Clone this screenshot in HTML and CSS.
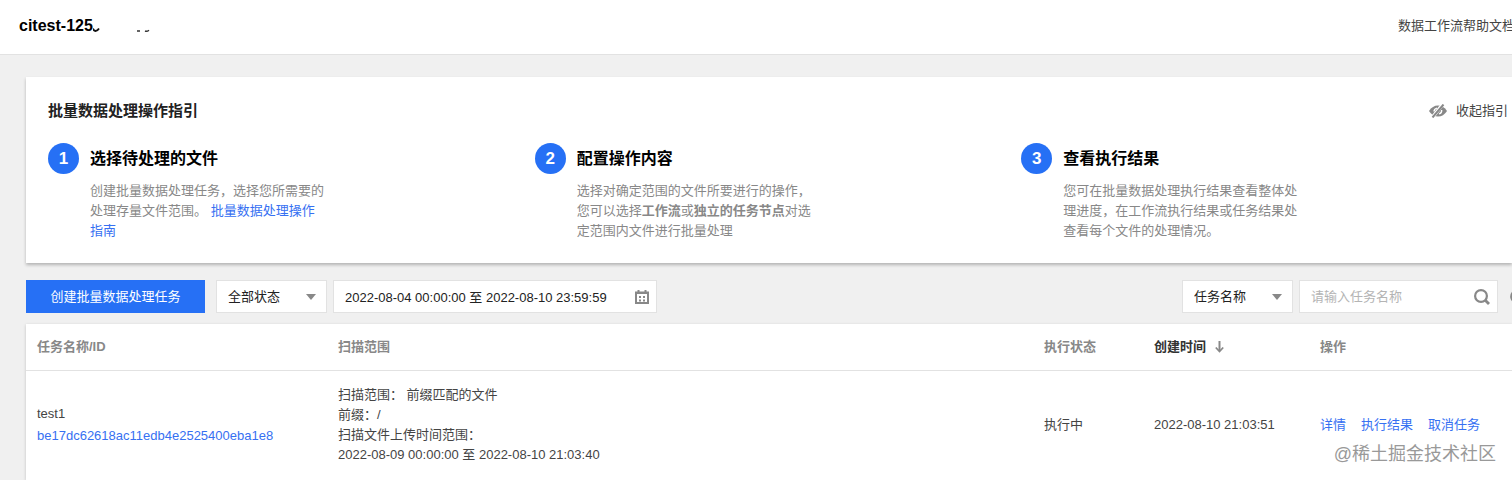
FILE: index.html
```html
<!DOCTYPE html>
<html lang="zh-CN">
<head>
<meta charset="utf-8">
<title>citest</title>
<link rel="stylesheet" href="styles.css">
</head>
<body>
<header class="topbar">
  <h1 class="bucket">citest-125<svg class="bucket-mask" width="60" height="16" viewBox="0 0 60 16" aria-hidden="true"><path d="M0 9.500Q.5 12 2.500 12Q4.500 12 6 9.500" fill="none" stroke="#111" stroke-width="1.800"/><path d="M44 12h3M52 12q2 .8 4-.8" fill="none" stroke="#333" stroke-width="1.400"/></svg></h1>
  <a class="help" href="#help">数据工作流帮助文档</a>
</header>
<main class="page">
  <section class="guide">
    <div class="guide-head">
      <h2 class="guide-title">批量数据处理操作指引</h2>
      <button class="collapse" type="button">
        <svg width="18" height="14" viewBox="0 0 18 14" aria-hidden="true"><path d="M0 7Q3.500 1.500 9 1.500Q14.500 1.500 18 7Q14.500 12.500 9 12.500Q3.500 12.500 0 7Z" fill="#888"/><path d="M8 4Q5 5 5 7.500M12.700 6Q13 9 10 10" fill="none" stroke="#fff" stroke-width="1.300"/><path d="M2.500 14.500L14 0" stroke="#fff" stroke-width="3.600"/><path d="M3.500 13.500L14.500 .5" stroke="#888" stroke-width="2"/></svg>
        收起指引
      </button>
    </div>
    <ol class="steps">
      <li class="step">
        <span class="num">1</span>
        <div><h3 class="step-title">选择待处理的文件</h3>
        <p class="step-text">创建批量数据处理任务，选择您所需要的处理存量文件范围。 <a href="#guide">批量数据处理操作指南</a></p></div>
      </li>
      <li class="step">
        <span class="num">2</span>
        <div><h3 class="step-title">配置操作内容</h3>
        <p class="step-text">选择对确定范围的文件所要进行的操作，您可以选择<b>工作流</b>或<b>独立的任务节点</b>对选定范围内文件进行批量处理</p></div>
      </li>
      <li class="step">
        <span class="num">3</span>
        <div><h3 class="step-title">查看执行结果</h3>
        <p class="step-text">您可在批量数据处理执行结果查看整体处理进度，在工作流执行结果或任务结果处查看每个文件的处理情况。</p></div>
      </li>
    </ol>
  </section>
  <div class="toolbar">
    <button class="create" type="button">创建批量数据处理任务</button>
    <div class="group">
      <div class="field select">
        <select class="control" aria-label="状态"><option>全部状态</option></select>
        <svg width="10" height="6" viewBox="0 0 10 6" aria-hidden="true"><path d="M0 0H10L5 6Z" fill="#888"/></svg>
      </div>
      <div class="field date">
        <input class="control" type="text" aria-label="时间范围" value="2022-08-04 00:00:00 至 2022-08-10 23:59:59">
        <svg width="14" height="14" viewBox="0 0 14 14" aria-hidden="true"><path d="M1 2.500H13V13H1Z" fill="none" stroke="#888" stroke-width="2"/><path d="M1 3H13M3.500 0V3M10.500 0V3" stroke="#888" stroke-width="2"/><path d="M4 6h2v2H4zM8 6h2v2H8zM4 9.500h2v2H4zM8 9.500h2v2H8z" fill="#888"/></svg>
      </div>
    </div>
    <div class="group search-group">
      <div class="field select">
        <select class="control" aria-label="搜索字段"><option>任务名称</option></select>
        <svg width="10" height="6" viewBox="0 0 10 6" aria-hidden="true"><path d="M0 0H10L5 6Z" fill="#888"/></svg>
      </div>
      <div class="field search">
        <input class="control" type="text" aria-label="搜索任务" placeholder="请输入任务名称">
        <svg width="16" height="16" viewBox="0 0 16 16" aria-hidden="true"><circle cx="7" cy="7" r="5.900" fill="none" stroke="#888" stroke-width="2.200"/><path d="M11 11L15 15" stroke="#888" stroke-width="2.800"/></svg>
      </div>
    </div>
    <button class="refresh" type="button" aria-label="刷新"><svg width="16" height="16" viewBox="0 0 16 16" aria-hidden="true"><path d="M13 4A6 6 0 1 0 14 9" fill="none" stroke="#888" stroke-width="2"/><path d="M15 1V6H10Z" fill="#888"/></svg></button>
  </div>
  <div class="table-card">
    <table class="tasks">
      <colgroup><col class="c-name"><col><col class="c-status"><col class="c-time"><col class="c-ops"></colgroup>
      <thead>
        <tr><th>任务名称/ID</th><th>扫描范围</th><th>执行状态</th><th class="sorted">创建时间<svg class="arrow" width="9" height="12" viewBox="0 0 9 12" aria-hidden="true"><path d="M4.500 0V10" stroke="#888" stroke-width="2"/><path d="M.8 6.500L4.500 10.500L8.200 6.500" fill="none" stroke="#888" stroke-width="1.800"/></svg></th><th>操作</th></tr>
      </thead>
      <tbody>
        <tr>
          <td class="name">test1<br><a href="#task">be17dc62618ac11edb4e2525400eba1e8</a></td>
          <td>扫描范围： 前缀匹配的文件<br>前缀：/<br>扫描文件上传时间范围：<br>2022-08-09 00:00:00 至 2022-08-10 21:03:40</td>
          <td>执行中</td>
          <td>2022-08-10 21:03:51</td>
          <td><div class="ops"><a href="#detail">详情</a><a href="#result">执行结果</a><a href="#cancel">取消任务</a></div></td>
        </tr>
      </tbody>
    </table>
  </div>
</main>
<div class="watermark">@稀土掘金技术社区</div>
</body>
</html>
```
FILE: styles.css
```css
* { box-sizing: border-box; }

body {
  margin: 0;
  min-height: 100vh;
  display: flex;
  flex-direction: column;
  position: relative;
  overflow-x: hidden;
  background: #f0f0f0;
  color: #444;
  font: 13px/20px "Liberation Sans", "Noto Sans CJK SC", sans-serif;
}

h1, h2, h3, p, ol { margin: 0; padding: 0; }
a { color: #3670f2; text-decoration: none; }
svg { flex: none; }

button, input, select {
  font: inherit;
  color: inherit;
  border: 0;
  padding: 0;
  background: none;
}

.topbar {
  display: flex;
  justify-content: space-between;
  align-items: center;
  height: 55px;
  padding: 0 0 3px 19px;
  background: #fff;
  border-bottom: 1px solid #e2e2e2;
}

.bucket { display: flex; align-items: center; font-size: 16px; color: #000; }
.bucket-mask { margin-top: 2px; }
.help { color: #444; margin-right: -3px; white-space: nowrap; }

.page {
  flex: 1;
  display: flex;
  flex-direction: column;
  padding: 22px 0 0 26px;
}

.guide {
  padding: 24px 4px 22px 22px;
  background: #fff;
  box-shadow: 0 2px 3px rgba(0, 0, 0, .25);
}

.guide-head { display: flex; justify-content: space-between; align-items: center; }
.guide-title { font-size: 15px; line-height: 20px; color: #222; }
.collapse { display: flex; align-items: center; gap: 9px; }

.steps {
  display: grid;
  grid-template-columns: repeat(3, 1fr);
  margin-top: 22px;
  list-style: none;
}

.step { display: flex; align-items: flex-start; gap: 11px; }

.num {
  flex: none;
  width: 31px;
  height: 31px;
  border-radius: 50%;
  background: #2670f5;
  color: #fff;
  font-size: 17px;
  font-weight: bold;
  line-height: 31px;
  text-align: center;
}

.step-title { font-size: 16px; line-height: 32px; color: #000; }
.step-text { width: 236px; margin-top: 6px; color: #888; }

.toolbar {
  display: flex;
  align-items: center;
  gap: 11px;
  padding: 17px 0 11px;
  overflow: hidden;
}

.create {
  width: 179px;
  height: 33px;
  background: #2670f5;
  color: #fff;
}

.group { display: flex; gap: 6px; }
.search-group { margin-left: auto; }

.field {
  display: flex;
  align-items: center;
  height: 33px;
  padding: 0 10px 0 11px;
  background: #fff;
  border: 1px solid #e2e2e2;
  color: #222;
}

.select { width: 111px; }
.date { width: 324px; padding-right: 7px; }
.search { width: 199px; padding-right: 7px; }

.control {
  flex: 1;
  min-width: 0;
  height: 100%;
  appearance: none;
  outline: none;
}

.control::placeholder { color: #b4b4b4; }
.refresh { display: flex; margin-right: -13px; }

.table-card {
  flex: 1;
  background: #fff;
  box-shadow: 0 1px 3px rgba(0, 0, 0, .2);
}

.tasks {
  width: 100%;
  table-layout: fixed;
  border-collapse: collapse;
}

.c-name { width: 301px; }
.c-status { width: 110px; }
.c-time { width: 166px; }
.c-ops { width: 203px; }

.tasks th {
  height: 46px;
  padding: 0 0 0 11px;
  border-bottom: 1px solid #e2e2e2;
  color: #888;
  text-align: left;
}

.tasks td { padding: 14px 0 14px 11px; }
.tasks .sorted { color: #333; }
.arrow { margin-left: 9px; vertical-align: -2px; }
.name { line-height: 22px; }
.ops { display: flex; gap: 15px; }

.watermark {
  position: absolute;
  right: 16px;
  bottom: 14px;
  color: #999;
  font-size: 18px;
  line-height: 24px;
  text-shadow: 1px 1px 1px #fff, -1px -1px 1px #fff;
}
```
